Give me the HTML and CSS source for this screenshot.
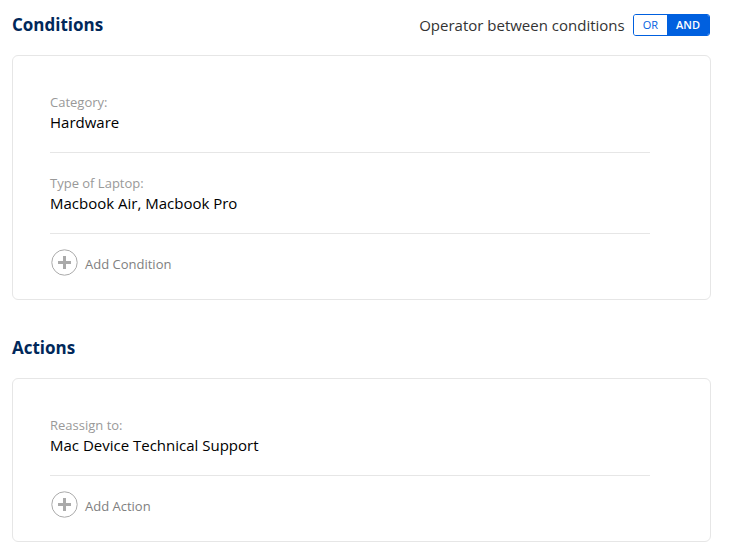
FILE: index.html
```html
<!DOCTYPE html>
<html lang="en">
<head>
<meta charset="utf-8">
<meta name="viewport" content="width=device-width, initial-scale=1">
<title>Conditions and actions</title>
<link rel="stylesheet" href="styles.css">
</head>
<body>
<main class="page">
  <section>
    <header class="section-header">
      <h2 class="title">Conditions</h2>
      <div class="operator" role="group" aria-labelledby="operator-label">
        <span class="operator-label" id="operator-label">Operator between conditions</span>
        <div class="toggle">
          <button class="toggle-option" type="button" aria-pressed="false">OR</button>
          <button class="toggle-option active" type="button" aria-pressed="true">AND</button>
        </div>
      </div>
    </header>
    <div class="card">
      <dl class="rules">
        <div class="rule"><dt>Category:</dt><dd>Hardware</dd></div>
        <div class="rule"><dt>Type of Laptop:</dt><dd>Macbook Air, Macbook Pro</dd></div>
      </dl>
      <button class="add" type="button">
        <svg class="add-icon" viewBox="0 0 27 27" aria-hidden="true"><circle cx="13.5" cy="13.5" r="12.7"/><path d="M7 13.5h13M13.5 7v13"/></svg>
        <span class="add-text">Add Condition</span>
      </button>
    </div>
  </section>
  <section>
    <header class="section-header">
      <h2 class="title">Actions</h2>
    </header>
    <div class="card">
      <dl class="rules">
        <div class="rule"><dt>Reassign to:</dt><dd>Mac Device Technical Support</dd></div>
      </dl>
      <button class="add" type="button">
        <svg class="add-icon" viewBox="0 0 27 27" aria-hidden="true"><circle cx="13.5" cy="13.5" r="12.7"/><path d="M7 13.5h13M13.5 7v13"/></svg>
        <span class="add-text">Add Action</span>
      </button>
    </div>
  </section>
</main>
</body>
</html>
```
FILE: styles.css
```css
* {
  box-sizing: border-box;
}

body {
  margin: 0;
  background: #fff;
  color: #000;
  font-family: "Open Sans", "Noto Sans", sans-serif;
}

button {
  font-family: inherit;
  cursor: pointer;
}

.page {
  display: grid;
  gap: 23px;
  padding: 0 30px 7px 12px;
}

.section-header {
  display: flex;
  align-items: center;
  justify-content: space-between;
  height: 55px;
  padding-bottom: 5px;
}

.title {
  margin: 0;
  color: #00285a;
  font-size: 17px;
  font-weight: 700;
  line-height: 24px;
}

.operator {
  display: flex;
  align-items: center;
  gap: 8px;
  padding-right: 1px;
}

.operator-label {
  color: #333;
  font-size: 15px;
  line-height: 24px;
}

.toggle {
  display: flex;
  height: 22px;
  overflow: hidden;
  border: 1px solid #0060df;
  border-radius: 3px;
}

.toggle-option {
  padding: 0 9px;
  border: 0;
  background: #fff;
  color: #0060df;
  font-size: 11px;
  line-height: 20px;
}

.toggle-option.active {
  background: #0060df;
  color: #fff;
  font-weight: 600;
}

.card {
  padding: 16px 60px 23px 37px;
  border: 1px solid #e6e6e6;
  border-radius: 6px;
}

.rules {
  margin: 0;
}

.rule {
  padding: 20px 0;
  border-bottom: 1px solid #e6e6e6;
}

.rule dt {
  color: #999;
  font-size: 13px;
  line-height: 20px;
}

.rule dd {
  margin: 0;
  font-size: 15px;
  line-height: 20px;
}

.add {
  display: flex;
  align-items: center;
  gap: 7px;
  margin-top: 15px;
  padding: 0 0 0 1px;
  border: 0;
  background: none;
  color: #808080;
  font-size: 13px;
}

.add-icon {
  width: 27px;
  height: 27px;
  fill: none;
  stroke: #aaa;
}

.add-icon path {
  stroke-width: 3;
}

.add-text {
  padding-top: 3px;
  line-height: 20px;
}
```
